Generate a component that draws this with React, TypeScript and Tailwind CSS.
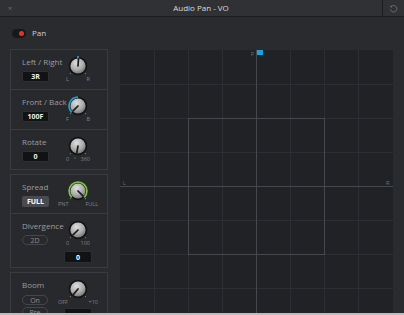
import React from 'react';

const FONT = "font-['Open_Sans','Liberation_Sans',sans-serif]";

type Arc = { color: string; from: number; to: number };

function pt(a: number, r: number, c = 11) {
  const rad = (a * Math.PI) / 180;
  return [c + r * Math.sin(rad), c - r * Math.cos(rad)];
}

function arcPath(from: number, to: number, r: number) {
  const [x1, y1] = pt(from, r);
  const [x2, y2] = pt(to, r);
  const large = Math.abs(to - from) > 180 ? 1 : 0;
  const sweep = to > from ? 1 : 0;
  return `M${x1} ${y1} A${r} ${r} 0 ${large} ${sweep} ${x2} ${y2}`;
}

function Knob({ angle, arc, id }: { angle: number; arc?: Arc; id: string }) {
  const [ix, iy] = pt(angle, 7);
  const [lx, ly] = pt(-135, 10.7);
  const [rx, ry] = pt(135, 10.7);
  return (
    <svg width="22" height="22" viewBox="0 0 22 22" className="shrink-0">
      <defs>
        <radialGradient id={id} cx="40%" cy="30%" r="75%">
          <stop offset="0%" stopColor="#dedede" />
          <stop offset="60%" stopColor="#ababab" />
          <stop offset="100%" stopColor="#707070" />
        </radialGradient>
      </defs>
      <circle cx="11" cy="11" r="9.3" fill="#141416" />
      {arc && <path d={arcPath(arc.from, arc.to, 8.9)} stroke={arc.color} strokeWidth="1.7" fill="none" />}
      <circle cx="11" cy="11" r="7.6" fill={`url(#${id})`} />
      <line x1="11" y1="11" x2={ix} y2={iy} stroke="#1b1b1d" strokeWidth="1.7" strokeLinecap="round" />
      <circle cx={lx} cy={ly} r="0.6" fill="#8a8a8a" />
      <circle cx={rx} cy={ry} r="0.6" fill="#8a8a8a" />
    </svg>
  );
}

function ValueBox({ children, light }: { children?: React.ReactNode; light?: boolean }) {
  return (
    <div
      className={`h-[11px] w-[27px] rounded-[2px] flex items-center justify-center text-[7px] font-bold leading-none ${
        light ? 'bg-[#4a4b50] text-white' : 'bg-[#111214] text-[#f0f0f0] border border-[#2e2f33]'
      }`}
    >
      {children}
    </div>
  );
}

function Pill({ children }: { children?: React.ReactNode }) {
  return (
    <div className="h-[10px] w-[26px] rounded-full border border-[#45464b] flex items-center justify-center text-[7px] leading-none text-[#8d8d8d]">
      {children}
    </div>
  );
}

function Ticks({ left, mid, right, wide }: { left: string; mid?: string; right: string; wide?: boolean }) {
  return (
    <div
      className={`w-full h-[8px] -mt-[1px] flex items-center justify-between text-[5.5px] leading-none text-[#828282] ${
        wide ? 'px-[2px]' : 'px-[10px]'
      }`}
    >
      <span>{left}</span>
      {mid && <span>{mid}</span>}
      <span>{right}</span>
    </div>
  );
}

function Row({
  label,
  left,
  right,
  h,
  border,
}: {
  label: string;
  left: React.ReactNode;
  right: React.ReactNode;
  h: string;
  border?: boolean;
}) {
  return (
    <div className={`flex shrink-0 ${h} ${border ? 'border-b border-[#3a3b40]' : ''}`}>
      <div className="w-[45px] pl-[11px] flex flex-col">
        <div className="mt-[7px] h-[10px] text-[8px] leading-[10px] text-[#9d9d9d] whitespace-nowrap">{label}</div>
        <div className="mt-[4px] flex flex-col gap-[2px]">{left}</div>
      </div>
      <div className="w-[44px] pt-[5px] flex flex-col items-center">{right}</div>
    </div>
  );
}

function PanGrid() {
  const s = 34;
  const ks = [1, 2, 3, 4, 5, 6, 7];
  return (
    <svg width="273" height="263" viewBox="0 0 273 263" className="block">
      <rect width="273" height="263" fill="#212226" />
      {ks.map((k) => (
        <line key={'v' + k} x1={k * s + 0.5} y1="0" x2={k * s + 0.5} y2="263" stroke="#2d2e33" />
      ))}
      {ks.map((k) => (
        <line key={'h' + k} x1="0" y1={k * s + 0.5} x2="273" y2={k * s + 0.5} stroke="#2d2e33" />
      ))}
      <rect x="68.5" y="68.5" width="136" height="136" fill="none" stroke="#47484d" />
      <line x1="136.5" y1="0" x2="136.5" y2="263" stroke="#47484d" />
      <line x1="0" y1="136.5" x2="273" y2="136.5" stroke="#47484d" />
      <rect x="137" y="-1" width="6" height="6" fill="#19a3dc" />
      <text x="131" y="6" fontSize="5" fill="#6d6d6d" fontFamily="Liberation Sans, sans-serif">F</text>
      <text x="3" y="135" fontSize="5" fill="#6d6d6d" fontFamily="Liberation Sans, sans-serif">L</text>
      <text x="266" y="135" fontSize="5" fill="#6d6d6d" fontFamily="Liberation Sans, sans-serif">R</text>
    </svg>
  );
}

export default function App() {
  return (
    <div className={`w-[404px] h-[315px] overflow-hidden bg-[#bdbdbd] ${FONT}`}>
      <div className="h-[313px] flex flex-col bg-[#2a2b2f] overflow-hidden">
        {/* Title bar */}
        <div className="h-[17px] shrink-0 flex items-stretch bg-[#303135] border-b border-[#1b1c1f]">
          <div className="w-[20px] flex items-center justify-center text-[8px] leading-none text-[#6c6c6c]">×</div>
          <div className="flex-1 flex items-center justify-center text-[8px] leading-none text-[#dcdcdc]">Audio Pan - VO</div>
          <div className="w-[22px] border-l border-[#1b1c1f] flex items-center justify-center">
            <svg width="9" height="9" viewBox="0 0 10 10">
              <path d="M2.2 3.2 A3.6 3.6 0 1 1 1.6 6" fill="none" stroke="#6e6e6e" strokeWidth="1" />
              <path d="M0.8 2.6 L2.6 3.6 L3 1.6" fill="none" stroke="#6e6e6e" strokeWidth="0.9" />
            </svg>
          </div>
        </div>

        <div className="flex flex-1 min-h-0 overflow-hidden">
          {/* Left controls */}
          <div className="w-[120px] shrink-0 pl-[10px] pr-[12px] flex flex-col">
            <div className="h-[32px] shrink-0 flex items-center gap-[6px] pl-[2px]">
              <div className="w-[14px] h-[9px] rounded-full bg-[#17181a] flex items-center justify-end pr-[2px]">
                <div className="w-[5px] h-[5px] rounded-full bg-[#ee2f27]" />
              </div>
              <span className="text-[8px] leading-none text-[#cfcfcf]">Pan</span>
            </div>

            <div className="shrink-0 border border-[#3a3b40] bg-[#28292d] flex flex-col">
              <Row
                h="h-[40px]"
                border
                label="Left / Right"
                left={<ValueBox>3R</ValueBox>}
                right={
                  <>
                    <div className="relative">
                      <Knob id="k1" angle={4} />
                      <div className="absolute left-[10px] top-[1px] w-[2px] h-[2px] rounded-full bg-[#27b4e8]" />
                    </div>
                    <Ticks left="L" right="R" />
                  </>
                }
              />
              <Row
                h="h-[40px]"
                border
                label="Front / Back"
                left={<ValueBox>100F</ValueBox>}
                right={
                  <>
                    <Knob id="k2" angle={-135} arc={{ color: '#1f9fd6', from: -135, to: 0 }} />
                    <Ticks left="F" right="B" />
                  </>
                }
              />
              <Row
                h="h-[39px]"
                label="Rotate"
                left={<ValueBox>0</ValueBox>}
                right={
                  <>
                    <Knob id="k3" angle={190} />
                    <Ticks left="0" mid="°" right="360" />
                  </>
                }
              />
            </div>

            <div className="shrink-0 mt-[4px] border border-[#3a3b40] bg-[#28292d] flex flex-col">
              <Row
                h="h-[39px]"
                border
                label="Spread"
                left={<ValueBox light>FULL</ValueBox>}
                right={
                  <>
                    <Knob id="k4" angle={135} arc={{ color: '#7cc242', from: -135, to: 135 }} />
                    <Ticks left="PNT" right="FULL" wide />
                  </>
                }
              />
              <Row
                h="h-[53px]"
                label="Divergence"
                left={<Pill>2D</Pill>}
                right={
                  <>
                    <Knob id="k5" angle={-135} />
                    <Ticks left="0" right="100" />
                    <div className="mt-[3px] h-[12px] w-[28px] rounded-[2px] bg-[#111214] border border-[#2e2f33] flex items-center justify-center text-[7px] font-bold leading-none text-white">
                      0
                    </div>
                  </>
                }
              />
            </div>

            <div className="shrink-0 mt-[4px] border border-[#3a3b40] bg-[#28292d] flex flex-col">
              <Row
                h="h-[60px]"
                label="Boom"
                left={
                  <>
                    <div className="mt-[1px]">
                      <Pill>On</Pill>
                    </div>
                    <Pill>Pre</Pill>
                  </>
                }
                right={
                  <>
                    <Knob id="k6" angle={-140} />
                    <Ticks left="OFF" right="+10" wide />
                    <div className="mt-[1px] h-[12px] w-[28px] rounded-[2px] bg-[#111214] border border-[#2e2f33]" />
                  </>
                }
              />
            </div>
          </div>

          {/* Pan canvas */}
          <div className="flex-1 pt-[33px] pr-[11px]">
            <PanGrid />
          </div>
        </div>
      </div>
    </div>
  );
}
